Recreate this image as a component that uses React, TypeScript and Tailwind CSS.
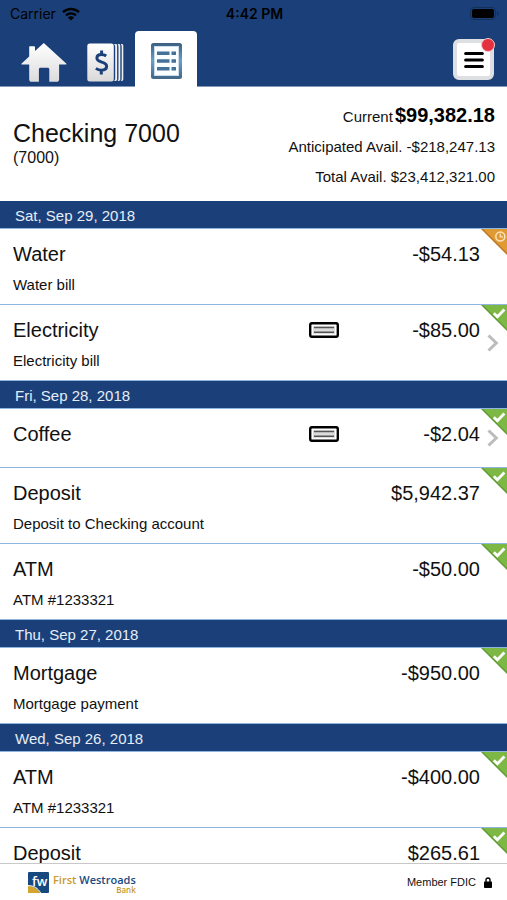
type Status = 'pending' | 'posted';

interface Transaction {
  id: number;
  title: string;
  memo?: string;
  amount: string;
  status: Status;
  hasCheck?: boolean;
}

interface Day {
  date: string;
  transactions: Transaction[];
}

const days: Day[] = [
  {
    date: 'Sat, Sep 29, 2018',
    transactions: [
      { id: 1, title: 'Water', memo: 'Water bill', amount: '-$54.13', status: 'pending' },
      { id: 2, title: 'Electricity', memo: 'Electricity bill', amount: '-$85.00', status: 'posted', hasCheck: true },
    ],
  },
  {
    date: 'Fri, Sep 28, 2018',
    transactions: [
      { id: 3, title: 'Coffee', amount: '-$2.04', status: 'posted', hasCheck: true },
      { id: 4, title: 'Deposit', memo: 'Deposit to Checking account', amount: '$5,942.37', status: 'posted' },
      { id: 5, title: 'ATM', memo: 'ATM #1233321', amount: '-$50.00', status: 'posted' },
    ],
  },
  {
    date: 'Thu, Sep 27, 2018',
    transactions: [
      { id: 6, title: 'Mortgage', memo: 'Mortgage payment', amount: '-$950.00', status: 'posted' },
    ],
  },
  {
    date: 'Wed, Sep 26, 2018',
    transactions: [
      { id: 7, title: 'ATM', memo: 'ATM #1233321', amount: '-$400.00', status: 'posted' },
      { id: 8, title: 'Deposit', amount: '$265.61', status: 'posted' },
    ],
  },
];

function WifiIcon() {
  return (
    <svg width="18" height="14" viewBox="0 0 18 14" fill="none" stroke="#000" strokeWidth="2.4">
      <path d="M1 5.2a11.6 11.6 0 0 1 16 0" />
      <path d="M4 8.4a7.3 7.3 0 0 1 10 0" />
      <path d="M9 13.6 5.9 10.5a4.4 4.4 0 0 1 6.2 0Z" fill="#000" stroke="none" />
    </svg>
  );
}

function BatteryIcon() {
  return (
    <svg width="29" height="13" viewBox="0 0 29 13">
      <rect x="0.5" y="0.5" width="25" height="12" rx="3.5" fill="none" stroke="#12305c" />
      <rect x="2" y="2" width="22" height="9" rx="2" fill="#000" />
      <path d="M27 4.5c1.3.4 1.8 1.1 1.8 2s-.5 1.6-1.8 2Z" fill="#12305c" />
    </svg>
  );
}

function HomeIcon() {
  return (
    <svg width="46" height="39" viewBox="0 0 46 39">
      <defs>
        <linearGradient id="home-fill" x1="0" y1="0" x2="0" y2="1">
          <stop offset="0" stopColor="#ffffff" />
          <stop offset="1" stopColor="#dcdcdc" />
        </linearGradient>
      </defs>
      <path
        d="M22.8 0 14 8V4.2c0-.7-.4-1-1-1H9.2c-.7 0-1 .4-1 1v9.2L.6 20.4c-.5.5-.2 1.2.5 1.2h7.1v14.6c0 1.7.9 2.6 2.5 2.6h7.2V26.4c0-1 .6-1.6 1.6-1.6h7.2c1 0 1.6.6 1.6 1.6v12.4h7.3c1.6 0 2.5-.9 2.5-2.6V21.6h6.6c.7 0 1-.7.5-1.2Z"
        fill="url(#home-fill)"
      />
    </svg>
  );
}

function ChecksIcon() {
  return (
    <svg width="37" height="39" viewBox="0 0 37 39">
      <defs>
        <linearGradient id="checks-fill" x1="0" y1="0" x2="0" y2="1">
          <stop offset="0" stopColor="#ffffff" />
          <stop offset="1" stopColor="#d9d9d9" />
        </linearGradient>
      </defs>
      <rect x="0.3" y="0.5" width="26.5" height="38" rx="2.5" fill="url(#checks-fill)" />
      <path d="M27 1h1.5c1 0 1.6.7 1.6 1.7v33.6c0 1-.6 1.7-1.6 1.7H27c.9-1 1.2-1.6 1.2-2.6V3.6C28.2 2.6 27.9 2 27 1Z" fill="#f1f1f1" />
      <path d="M30.6 1h1c1 0 1.7.7 1.7 1.7v33.6c0 1-.7 1.7-1.7 1.7h-1c.6-.8.9-1.6.9-2.6V3.6c0-1-.3-1.8-.9-2.6Z" fill="#f1f1f1" />
      <path d="M33.8 1h.8c1 0 1.7.7 1.7 1.7v33.6c0 1-.7 1.7-1.7 1.7h-.8c.6-.8.9-1.6.9-2.6V3.6c0-1-.3-1.8-.9-2.6Z" fill="#f1f1f1" />
      <path
        d="M19.2 13c-1.400-1-3-1.500-4.700-1.500-2.700 0-4.600 1.300-4.600 3.500 0 5.200 9.700 3 9.700 8.300 0 2.500-2.100 3.900-5.100 3.900-2 0-4-.6-5.600-1.800M14.600 7.500v4M14.300 27v4.500"
        fill="none"
        stroke="#1b4079"
        strokeWidth="3"
      />
    </svg>
  );
}

function RegisterIcon() {
  return (
    <svg width="31" height="36" viewBox="0 0 31 36">
      <defs>
        <linearGradient id="register-line" x1="0" y1="0" x2="0" y2="1">
          <stop offset="0" stopColor="#3f6384" />
          <stop offset="0.5" stopColor="#6a9fca" />
          <stop offset="1" stopColor="#44698a" />
        </linearGradient>
      </defs>
      <rect x="1.5" y="1.5" width="28" height="33" rx="1" fill="#c9dcec" stroke="url(#register-line)" strokeWidth="3" />
      <rect x="4" y="4" width="23" height="28" fill="#fbfdfe" />
      <path d="M6 10.2h12.500M20.500 10.200h4.500M6 18h12.500M20.500 18h4.500M6 25.800h12.500M20.500 25.800h4.500" stroke="#44719a" strokeWidth="3.6" />
    </svg>
  );
}

function MenuIcon() {
  return (
    <svg width="20" height="18" viewBox="0 0 20 18" stroke="#000" strokeWidth="3.2" strokeLinecap="round">
      <path d="M1.7 2.5h16.600M1.700 9h16.600M1.700 15.500h16.600" />
    </svg>
  );
}

function CheckSlipIcon() {
  return (
    <svg width="30" height="16" viewBox="0 0 30 16" role="img" aria-label="Check image">
      <rect x="1.2" y="1.2" width="27.6" height="13.6" rx="1.8" fill="#fff" stroke="#000" strokeWidth="2.4" />
      <rect x="4" y="4" width="22" height="8" fill="#dcdcdc" />
      <path d="M5 5.5h20M5 10.3h20" stroke="#555" strokeWidth="1.5" />
    </svg>
  );
}

function StatusCorner({ status }: { status: Status }) {
  if (status === 'pending') {
    return (
      <svg className="absolute top-0 right-0" width="26" height="26" viewBox="0 0 26 26" role="img" aria-label="Pending">
        <path d="M0 0h26v26Z" fill="#b9761f" />
        <path d="M2 0h24v24Z" fill="#e09a34" />
        <circle cx="19.3" cy="7.5" r="4.5" fill="none" stroke="#fbe3bd" strokeWidth="1.5" />
        <path d="M19.3 4.5v3.4H22" fill="none" stroke="#fbe3bd" strokeWidth="1.2" />
      </svg>
    );
  }

  return (
    <svg className="absolute top-0 right-0" width="26" height="26" viewBox="0 0 26 26" role="img" aria-label="Posted">
      <path d="M0 0h26v26Z" fill="#5f9a35" />
      <path d="M2 0h24v24Z" fill="#7cb843" />
      <path d="m12.8 8.2 3.6 3.5 7-7.2" fill="none" stroke="#fff" strokeWidth="2.8" />
    </svg>
  );
}

function ChevronIcon() {
  return (
    <svg width="12" height="18" viewBox="0 0 12 18" fill="none" stroke="#bcbcbc" strokeWidth="3">
      <path d="m1.5 1.5 7.8 7.5-7.8 7.5" />
    </svg>
  );
}

function LockIcon() {
  return (
    <svg width="8" height="11" viewBox="0 0 8 11">
      <path d="M2 5V3a2 2 0 0 1 4 0v2" fill="none" stroke="#000" strokeWidth="1.4" />
      <rect y="4.5" width="8" height="6.5" rx="0.8" fill="#000" />
    </svg>
  );
}

function BankLogo() {
  return (
    <a href="#home" className="flex items-start gap-1" aria-label="First Westroads Bank">
      <svg width="21" height="21" viewBox="0 0 21 21">
        <rect width="21" height="21" rx="1" fill="#17497f" />
        <path d="M0 14c5.500 0 9.500 2.400 12 7H0Z" fill="#d3a52e" />
        <path d="M0 13.600c5.800 0 10 2.500 12.600 7.400" fill="none" stroke="#fff" />
        <text x="4" y="14" fill="#fff" fontFamily="Open Sans, sans-serif" fontSize="13" fontWeight="600">
          fw
        </text>
      </svg>
      <span className="flex flex-col items-end font-['Open_Sans',sans-serif] font-semibold">
        <span className="text-[11px] leading-[15px] text-[#1b4a80]">
          <span className="text-[#c79a2b]">First</span> Westroads
        </span>
        <span className="text-[8px] leading-[6px] text-[#c79a2b]">Bank</span>
      </span>
    </a>
  );
}

function StatusBar() {
  return (
    <div className="grid h-[27px] grid-cols-3 items-center pr-2 pl-2.5 font-[Inter,sans-serif] text-sm text-black">
      <span className="flex items-center gap-1.5">
        Carrier
        <WifiIcon />
      </span>
      <span className="text-center font-semibold">4:42 PM</span>
      <span className="justify-self-end">
        <BatteryIcon />
      </span>
    </div>
  );
}

function TransactionRow({ item }: { item: Transaction }) {
  return (
    <li className="relative min-h-[59px] border-b border-[#8fb5e0] pt-3 pr-[27px] pb-[9px] pl-[13px]">
      <div className="flex items-center text-xl leading-[26px]">
        <span className="flex-1">{item.title}</span>
        {item.hasCheck && <CheckSlipIcon />}
        <span className="w-[141px] text-right">{item.amount}</span>
      </div>
      {item.memo && <p className="mt-2 text-[15px] leading-5">{item.memo}</p>}
      <StatusCorner status={item.status} />
      {item.hasCheck && (
        <button
          type="button"
          aria-label={`View ${item.title}`}
          className="absolute inset-y-0 right-0 flex w-5 items-center"
        >
          <ChevronIcon />
        </button>
      )}
    </li>
  );
}

export default function App() {
  return (
    <div className="flex h-dvh flex-col bg-white font-['Liberation_Sans',Arial,sans-serif] text-[#111]">
      <header className="border-b border-[#8296b8] bg-[#1b4079]">
        <StatusBar />
        <div className="flex items-end justify-between pt-1 pr-[13px] pl-[21px]">
          <nav className="flex items-end">
            <button type="button" aria-label="Home" className="mr-5 pb-1">
              <HomeIcon />
            </button>
            <button type="button" aria-label="Payments" className="mr-[11px] pb-1">
              <ChecksIcon />
            </button>
            <button
              type="button"
              aria-label="Register"
              aria-current="page"
              className="-mb-px flex h-14 w-[62px] items-center justify-center rounded-t bg-white pt-1"
            >
              <RegisterIcon />
            </button>
          </nav>
          <button
            type="button"
            aria-label="Menu"
            className="relative mb-1.5 flex size-[41px] items-center justify-center rounded-md border-4 border-[#dedfe2] bg-white"
          >
            <MenuIcon />
            <span className="absolute -top-[5px] -right-[5px] size-[14px] rounded-full border border-[#f3c6cc] bg-[#e5303f]" />
          </button>
        </div>
      </header>

      <section className="flex items-start justify-between pt-[15px] pr-3 pb-[9px] pl-[13px]">
        <div className="pt-4">
          <h1 className="text-[25px] leading-[30px]">Checking 7000</h1>
          <p className="text-base leading-5">(7000)</p>
        </div>
        <div className="text-right text-[15px] leading-[30px]">
          <p className="flex items-baseline justify-end gap-0.5">
            Current <strong className="text-xl leading-none text-black">$99,382.18</strong>
          </p>
          <p>Anticipated Avail. -$218,247.13</p>
          <p>Total Avail. $23,412,321.00</p>
        </div>
      </section>

      <main className="min-h-0 flex-1 overflow-y-auto [scrollbar-width:none]">
        {days.map((day) => (
          <section key={day.date}>
            <h2 className="border-b border-[#8fb5e0] bg-[#1b4079] px-[15px] pt-0.5 text-[15px] leading-[25px] text-[#e6edf7]">
              {day.date}
            </h2>
            <ul>
              {day.transactions.map((item) => (
                <TransactionRow key={item.id} item={item} />
              ))}
            </ul>
          </section>
        ))}
      </main>

      <footer className="flex h-[37px] items-center justify-between border-t border-[#c8c8c8] bg-white pr-[15px] pl-7">
        <BankLogo />
        <span className="flex items-center gap-2 text-[11px]">
          Member FDIC
          <LockIcon />
        </span>
      </footer>
    </div>
  );
}
